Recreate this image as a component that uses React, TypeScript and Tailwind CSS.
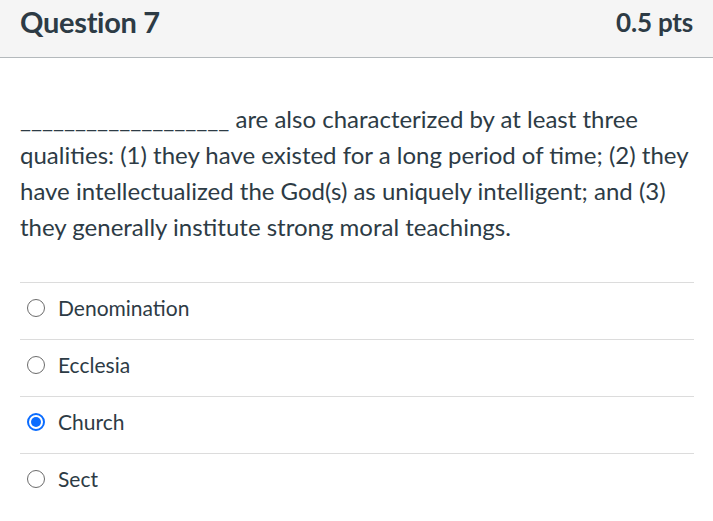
import { useState } from "react";

const answers = ["Denomination", "Ecclesia", "Church", "Sect"];

function Radio({ checked }: { checked: boolean }) {
  if (checked) {
    return (
      <span className="flex h-[18px] w-[18px] items-center justify-center rounded-full border-2 border-[#0a6cff] bg-white">
        <span className="h-[10px] w-[10px] rounded-full bg-[#0a6cff]" />
      </span>
    );
  }
  return <span className="h-[18px] w-[18px] rounded-full border-[1.5px] border-[#6b6b6b] bg-white" />;
}

export default function App() {
  const [selected, setSelected] = useState("Church");

  return (
    <div className="min-h-screen bg-white font-['Lato','Noto_Sans',sans-serif] text-[#2d3b45]">
      <header className="flex h-[58px] items-start justify-between border-b border-[#b4b9bc] bg-[#f5f5f5] px-5 pt-[5px]">
        <h2 className="text-[29px] font-bold leading-[34px] tracking-[-0.3px]">Question 7</h2>
        <span className="text-[26px] font-bold leading-[34px] tracking-[-0.2px]">0.5 pts</span>
      </header>

      <div className="px-5 pt-[43px]">
        <p className="text-[24px] leading-[36px]">
          ___________________ are also characterized by at least three qualities: (1) they have existed for a long
          period of time; (2) they have intellectualized the God(s) as uniquely intelligent; and (3) they generally
          institute strong moral teachings.
        </p>

        <div className="mt-[37px] w-[674px]">
          {answers.map((a) => (
            <label
              key={a}
              className="flex h-[57px] cursor-pointer items-center gap-[13px] border-t border-[#dcdcdc] pb-[7px] pl-[7px] text-[21px]"
              onClick={() => setSelected(a)}
            >
              <Radio checked={selected === a} />
              <span>{a}</span>
            </label>
          ))}
        </div>
      </div>
    </div>
  );
}
